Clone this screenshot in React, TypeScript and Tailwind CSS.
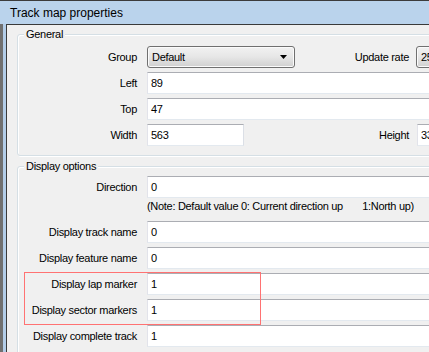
import React from "react";

const font = "font-['Liberation_Sans',Arial,sans-serif]";

function TextBox({ value, className = "" }: { value: string; className?: string }) {
  return (
    <div
      className={`h-[22px] shrink-0 bg-white border border-t-[#abadb3] border-l-[#e2e3ea] border-r-[#dbdfe6] border-b-[#e3e9ef] flex items-center pl-[3px] ${className}`}
    >
      {value}
    </div>
  );
}

function Combo({ value, className = "", arrow = true }: { value: string; className?: string; arrow?: boolean }) {
  return (
    <div
      className={`h-[22px] shrink-0 rounded-[3px] border border-[#707070] bg-gradient-to-b from-[#f2f2f2] via-[#e6e6e6] to-[#d0d0d0] flex items-center justify-between pl-[4px] pr-[7px] shadow-[inset_0_0_0_1px_#fbfbfb] ${className}`}
    >
      <span>{value}</span>
      {arrow && (
        <svg width="7" height="4" viewBox="0 0 7 4">
          <path d="M0 0 H7 L3.5 4 Z" fill="#000" />
        </svg>
      )}
    </div>
  );
}

function Row({ label, children }: { label: string; children: React.ReactNode }) {
  return (
    <div className="flex items-center h-[22px]">
      <div className="w-[129px] shrink-0 text-right pr-[10px] whitespace-nowrap">{label}</div>
      {children}
    </div>
  );
}

function GroupBox({ title, className = "", children }: { title: string; className?: string; children: React.ReactNode }) {
  return (
    <div
      className={`relative w-[480px] ml-[10px] rounded-[3px] border border-[#d5dfe5] shadow-[inset_1px_1px_0_#ffffff,1px_1px_0_#ffffff] ${className}`}
    >
      <span className="absolute left-[6px] top-[-8px] bg-[#f0f0f0] px-[2px] leading-[14px]">{title}</span>
      {children}
    </div>
  );
}

export default function App() {
  return (
    <div className={`w-[429px] h-[352px] overflow-hidden bg-[#f0f0f0] text-[11px] tracking-[-0.3px] text-black ${font} relative`}>
      {/* Title bar */}
      <div className="h-[24px] border-t border-[#3c3c3c] bg-[#bad3ec] flex items-center pl-[10px] text-[12px] tracking-normal">
        Track map properties
      </div>

      <div className="flex h-[328px]">
        {/* left frame */}
        <div className="flex shrink-0">
          <div className="w-[3px] bg-[#707070]" />
          <div className="w-[3px] bg-[#b3cde8]" />
        </div>

        {/* window body */}
        <div className="flex-1 border-l border-t border-[#3a3a3a] overflow-hidden">
          <GroupBox title="General" className="mt-[9px] pt-[11px] pb-[9px]">
            <div className="flex flex-col gap-[4px]">
              <Row label="Group">
                <Combo value="Default" className="w-[148px]" />
                <span className="w-[121px] shrink-0 text-right pr-[7px] whitespace-nowrap">Update rate</span>
                <Combo value="25" className="w-[60px]" arrow={false} />
              </Row>
              <Row label="Left">
                <TextBox value="89" className="flex-1" />
              </Row>
              <Row label="Top">
                <TextBox value="47" className="flex-1" />
              </Row>
              <Row label="Width">
                <TextBox value="563" className="w-[97px]" />
                <span className="w-[173px] shrink-0 text-right pr-[8px]">Height</span>
                <TextBox value="330" className="w-[60px]" />
              </Row>
            </div>
          </GroupBox>

          <GroupBox title="Display options" className="mt-[10px] pt-[9px] pb-[20px]">
            <div className="flex flex-col">
              <Row label="Direction">
                <TextBox value="0" className="flex-1" />
              </Row>
              <div className="h-[23px] pl-[129px] pt-[2px] leading-[13px] whitespace-nowrap">
                (Note: Default value 0: Current direction up&nbsp;&nbsp;&nbsp;&nbsp;&nbsp;&nbsp;&nbsp;1:North up)
              </div>
              <div className="flex flex-col gap-[4px]">
                <Row label="Display track name">
                  <TextBox value="0" className="flex-1" />
                </Row>
                <Row label="Display feature name">
                  <TextBox value="0" className="flex-1" />
                </Row>
                <Row label="Display lap marker">
                  <TextBox value="1" className="flex-1" />
                </Row>
                <Row label="Display sector markers">
                  <TextBox value="1" className="flex-1" />
                </Row>
                <Row label="Display complete track">
                  <TextBox value="1" className="flex-1" />
                </Row>
              </div>
            </div>
          </GroupBox>
        </div>
      </div>

      {/* highlight */}
      <div className="absolute left-[24px] top-[272px] w-[237px] h-[53px] border border-[#ff7272] pointer-events-none" />
    </div>
  );
}
